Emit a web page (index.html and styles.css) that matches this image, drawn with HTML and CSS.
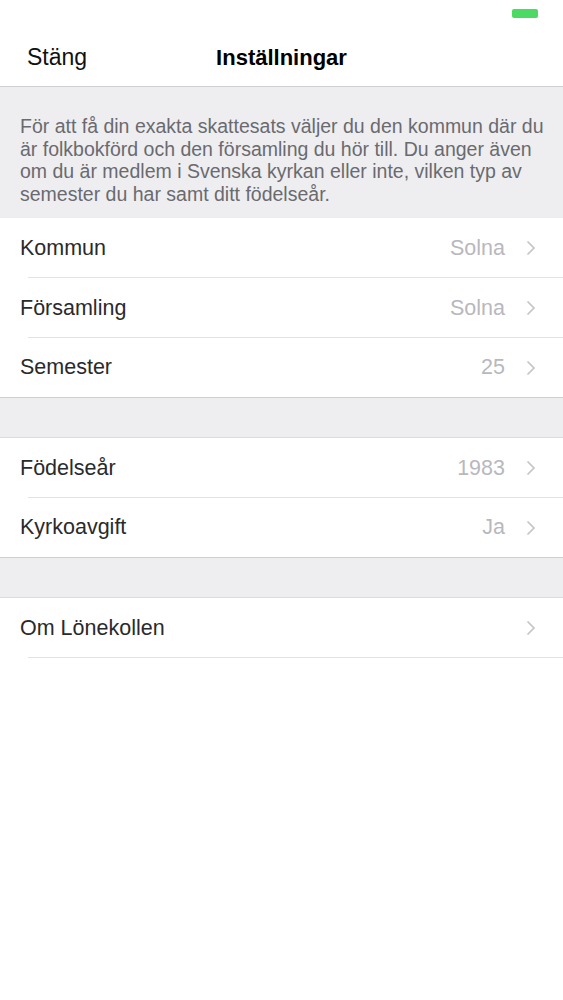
FILE: index.html
```html
<!DOCTYPE html>
<html lang="sv">
<head>
    <meta charset="UTF-8">
    <meta name="viewport" content="width=device-width, initial-scale=1.0">
    <title>Inställningar</title>
    <link rel="stylesheet" href="styles.css">
</head>
<body>

    <div class="statusbar">
        <div class="battery"></div>
    </div>

    <div class="navbar">
        <div class="nav-left">Stäng</div>
        <div class="nav-title">Inställningar</div>
        <div></div>
    </div>

    <div class="note">
        För att få din exakta skattesats väljer du den kommun där du är folkbokförd och den församling du hör till. Du anger även om du är medlem i Svenska kyrkan eller inte, vilken typ av semester du har samt ditt födelseår.
    </div>

    <div class="group">
        <div class="row">
            <span class="label">Kommun</span>
            <span class="value">Solna</span>
            <svg class="chevron" width="10" height="16" viewBox="0 0 10 16"><path d="M1.5 1.5 L8 8 L1.5 14.5"/></svg>
        </div>
        <div class="row">
            <span class="label">Församling</span>
            <span class="value">Solna</span>
            <svg class="chevron" width="10" height="16" viewBox="0 0 10 16"><path d="M1.5 1.5 L8 8 L1.5 14.5"/></svg>
        </div>
        <div class="row">
            <span class="label">Semester</span>
            <span class="value">25</span>
            <svg class="chevron" width="10" height="16" viewBox="0 0 10 16"><path d="M1.5 1.5 L8 8 L1.5 14.5"/></svg>
        </div>
    </div>

    <div class="gap"></div>

    <div class="group">
        <div class="row">
            <span class="label">Födelseår</span>
            <span class="value">1983</span>
            <svg class="chevron" width="10" height="16" viewBox="0 0 10 16"><path d="M1.5 1.5 L8 8 L1.5 14.5"/></svg>
        </div>
        <div class="row">
            <span class="label">Kyrkoavgift</span>
            <span class="value">Ja</span>
            <svg class="chevron" width="10" height="16" viewBox="0 0 10 16"><path d="M1.5 1.5 L8 8 L1.5 14.5"/></svg>
        </div>
    </div>

    <div class="gap"></div>

    <div class="group last">
        <div class="row">
            <span class="label">Om Lönekollen</span>
            <span class="value"></span>
            <svg class="chevron" width="10" height="16" viewBox="0 0 10 16"><path d="M1.5 1.5 L8 8 L1.5 14.5"/></svg>
        </div>
    </div>

</body>
</html>
```

FILE: styles.css
```css
body {
    margin: 0;
    background-color: white;
    font-family: "Liberation Sans", Arial, sans-serif;
    color: #2a2a2c;
}

.statusbar {
    height: 29px;
    display: flex;
    justify-content: flex-end;
    padding-right: 25px;
}

.battery {
    width: 26px;
    height: 9px;
    margin-top: 9px;
    border-radius: 2px;
    background-color: #4cd964;
}

.navbar {
    height: 57px;
    display: grid;
    grid-template-columns: 1fr auto 1fr;
    align-items: center;
    border-bottom: 1px solid #cfcfd3;
}

.nav-left {
    padding-left: 27px;
    font-size: 23px;
    color: #111;
}

.nav-title {
    font-size: 22px;
    font-weight: bold;
    color: #000;
}

.note {
    background-color: #eeeef1;
    color: #6a6a6f;
    font-size: 19.5px;
    line-height: 22.5px;
    padding: 28px 16px 13px 20px;
}

.group {
    background-color: white;
    border-bottom: 1px solid #cfcfd3;
}

.group.last {
    border-bottom: none;
}

.row {
    height: 60px;
    display: flex;
    align-items: center;
    padding: 0 27px 0 20px;
    box-sizing: border-box;
    background: linear-gradient(#e3e3e6, #e3e3e6) no-repeat 28px 100% / calc(100% - 28px) 1px;
}

.group .row:last-child {
    height: 59px;
    background: none;
}

.group.last .row:last-child {
    height: 60px;
    background: linear-gradient(#e3e3e6, #e3e3e6) no-repeat 28px 100% / calc(100% - 28px) 1px;
}

.label {
    flex: 1;
    font-size: 21.5px;
}

.value {
    font-size: 21.5px;
    color: #b8b8bd;
    margin-right: 21px;
}

.chevron {
    fill: none;
    stroke: #c4c4c9;
    stroke-width: 1.7;
}

.gap {
    height: 39px;
    background-color: #eeeef1;
    border-bottom: 1px solid #dcdce0;
}
```
